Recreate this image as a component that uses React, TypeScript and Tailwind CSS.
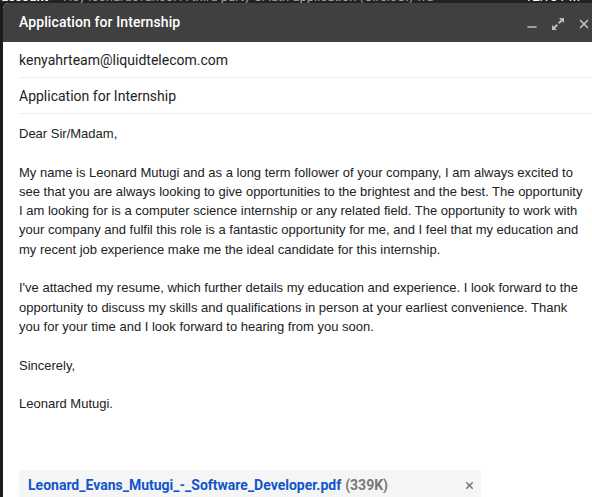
import { Minus, X } from "lucide-react";

const paragraphs = [
  "Dear Sir/Madam,",
  "My name is Leonard Mutugi and as a long term follower of your company, I am always excited to see that you are always looking to give opportunities to the brightest and the best. The opportunity I am looking for is a computer science internship or any related field. The opportunity to work with your company and fulfil this role is a fantastic opportunity for me, and I feel that my education and my recent job experience make me the ideal candidate for this internship.",
  "I've attached my resume, which further details my education and experience. I look forward to the opportunity to discuss my skills and qualifications in person at your earliest convenience. Thank you for your time and I look forward to hearing from you soon.",
  "Sincerely,",
  "Leonard Mutugi.",
];

const ExpandIcon = () => (
  <svg width="12" height="12" viewBox="0 0 12 12" fill="#bdbdbd">
    <path d="M7 0h5v5l-1.8-1.8L7.4 6 6 4.6 8.8 1.8z" />
    <path d="M5 12H0V7l1.8 1.8L4.6 6 6 7.4 3.2 10.2z" />
  </svg>
);

const App = () => {
  return (
    <div className="w-[592px] h-[497px] bg-[#222] overflow-hidden flex flex-col">
      {/* bit of inbox row peeking above the compose window */}
      <div className="h-[3px] overflow-hidden shrink-0 relative">
        <div
          className="absolute left-0 top-[-10px] flex w-[640px] text-[13px] leading-[13px] whitespace-nowrap text-[#9e9e9e]"
          style={{ fontFamily: "Roboto, sans-serif" }}
        >
          <span className="font-bold text-white ml-[-14px]">ur account</span>
          <span className="ml-2">- Hey leonardevans0! A third party OAuth application (CircleCI) wa</span>
          <span className="ml-auto mr-[60px] text-white">12:15 PM</span>
        </div>
      </div>
      <div className="flex flex-1 min-h-0">
        <div className="w-[3px] shrink-0 bg-[#1c1c1c]" />
        <div className="w-[600px] shrink-0 flex flex-col bg-white rounded-tl-[6px] overflow-hidden">
          <div
            className="h-[39px] shrink-0 bg-[#404040] flex items-center pl-4 pr-[12px]"
            style={{ fontFamily: "Roboto, sans-serif" }}
          >
            <span className="text-[14px] font-medium text-white tracking-[0.1px]">Application for Internship</span>
            <div className="ml-auto flex items-center gap-[13px] mt-[3px]">
              <Minus size={14} strokeWidth={2.5} color="#bdbdbd" className="mt-[6px]" />
              <ExpandIcon />
              <X size={14} strokeWidth={3} color="#bdbdbd" />
            </div>
          </div>
          <div className="pl-4" style={{ fontFamily: "Roboto, sans-serif" }}>
            <div className="h-[36px] flex items-center border-b border-[#efefef] text-[14px] text-[#222] pt-[1px]">
              kenyahrteam@liquidtelecom.com
            </div>
            <div className="h-[36px] flex items-center border-b border-[#efefef] text-[14px] text-[#222] pt-[1px]">
              Application for Internship
            </div>
          </div>
          <div
            className="pl-4 pr-[17px] pt-[10px] text-[13px] leading-[19.3px] text-[#222] flex flex-col gap-[19.3px]"
            style={{ fontFamily: "'Liberation Sans', Arial, sans-serif" }}
          >
            {paragraphs.map((p) => (
              <p key={p}>{p}</p>
            ))}
          </div>
          <div className="pl-4 mt-[57px]">
            <div className="w-[462px] h-[30px] bg-[#f5f5f5] flex items-center pl-[9px] pr-[6px] text-[14px] font-bold">
              <span className="text-[#15c]" style={{ fontFamily: "Roboto, sans-serif" }}>
                Leonard_Evans_Mutugi_-_Software_Developer.pdf
              </span>
              <span className="ml-[4px] text-[#777]" style={{ fontFamily: "Roboto, sans-serif" }}>
                (339K)
              </span>
              <X size={11} strokeWidth={3.5} color="#777" className="ml-auto" />
            </div>
          </div>
        </div>
      </div>
    </div>
  );
};

export default App;
